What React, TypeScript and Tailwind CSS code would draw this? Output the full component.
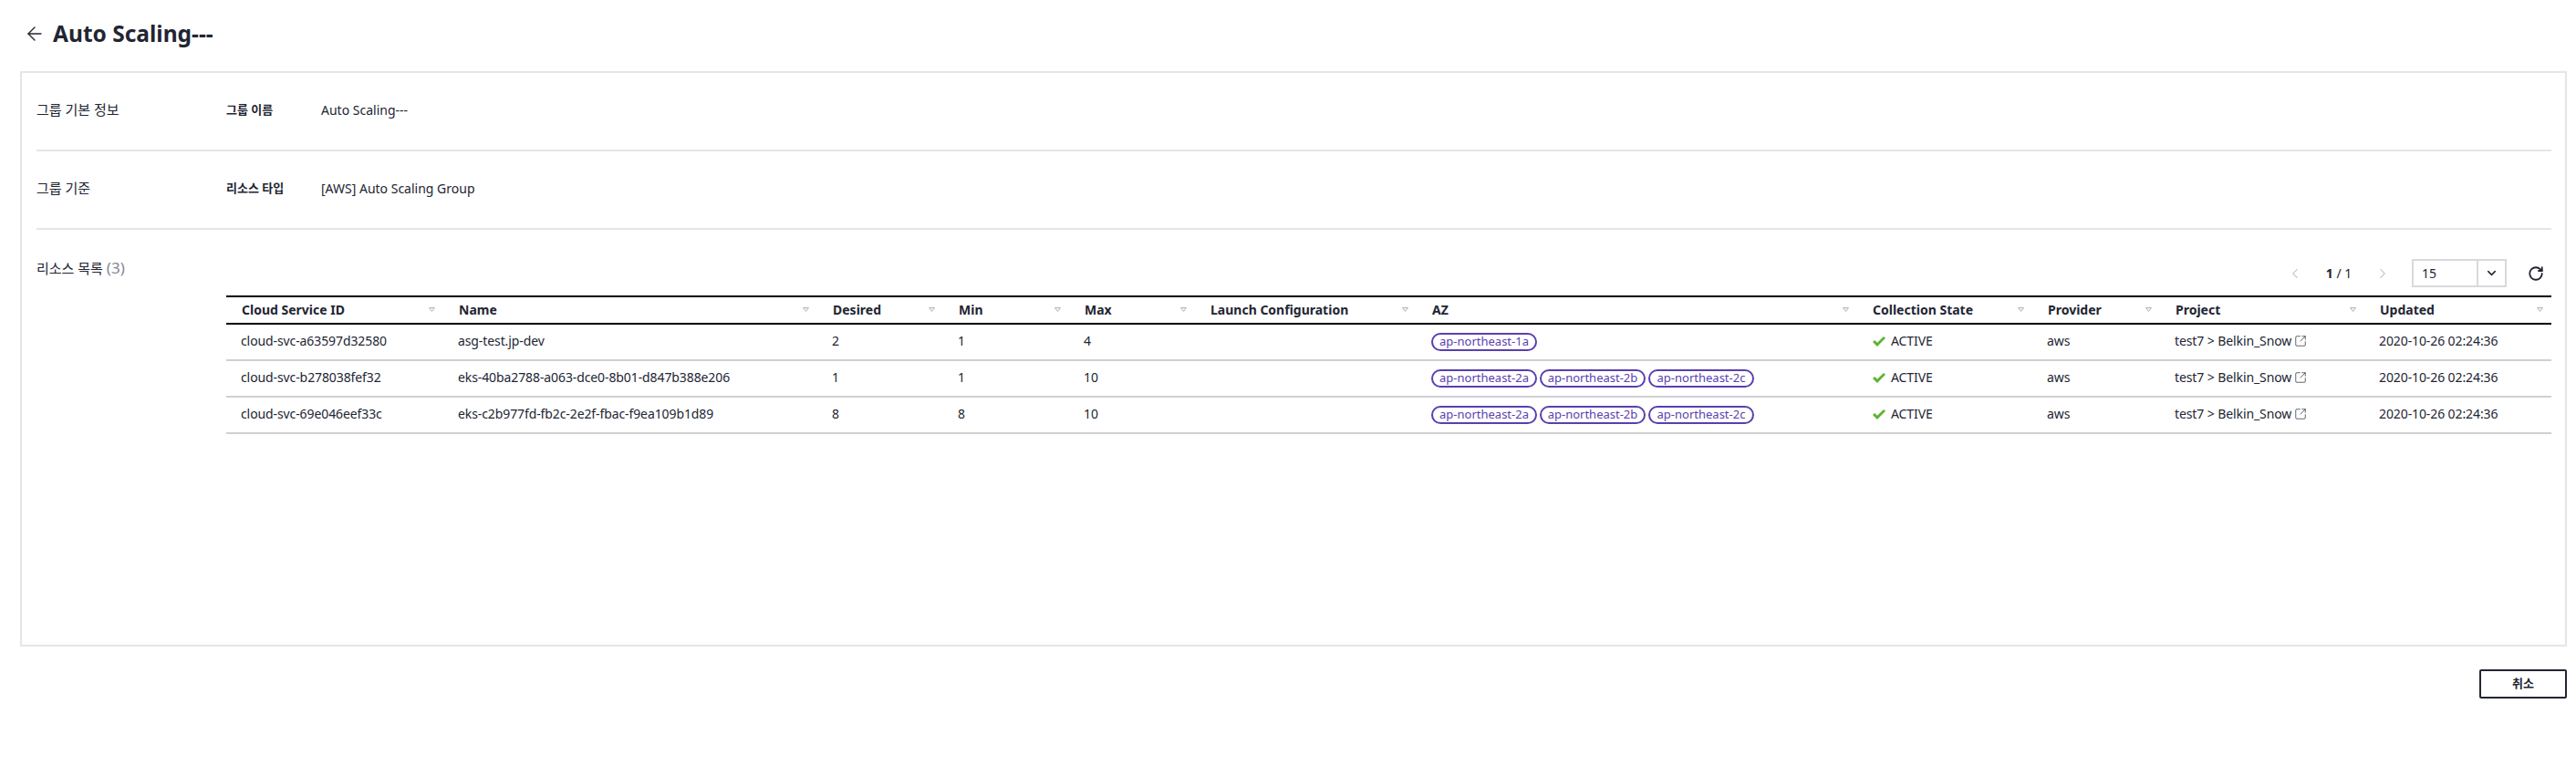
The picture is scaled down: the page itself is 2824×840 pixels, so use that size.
import React from "react";
import { ArrowLeft, ChevronLeft, ChevronRight, ChevronDown, RotateCw, SquareArrowOutUpRight } from "lucide-react";

const font = "font-['Noto_Sans','Noto_Sans_CJK_KR',sans-serif]";
const cols = "grid grid-cols-[238px_410px_138px_138px_138px_243px_483px_192px_140px_224px_205px]";

const headers = ["Cloud Service ID", "Name", "Desired", "Min", "Max", "Launch Configuration", "AZ", "Collection State", "Provider", "Project", "Updated"];
const rows = [
  { id: "cloud-svc-a63597d32580", name: "asg-test.jp-dev", d: "2", min: "1", max: "4", az: ["ap-northeast-1a"] },
  { id: "cloud-svc-b278038fef32", name: "eks-40ba2788-a063-dce0-8b01-d847b388e206", d: "1", min: "1", max: "10", az: ["ap-northeast-2a", "ap-northeast-2b", "ap-northeast-2c"] },
  { id: "cloud-svc-69e046eef33c", name: "eks-c2b977fd-fb2c-2e2f-fbac-f9ea109b1d89", d: "8", min: "8", max: "10", az: ["ap-northeast-2a", "ap-northeast-2b", "ap-northeast-2c"] },
];

function Sort() {
  return (
    <svg width="7" height="5" viewBox="0 0 7 5" className="shrink-0">
      <path d="M0.5 0.5H6.5L3.5 4.5Z" fill="#f4f4f6" stroke="#b4b4bc" strokeWidth="1" />
    </svg>
  );
}

function Cell({ children }: { children?: React.ReactNode }) {
  return <div className="flex items-center pl-[16px] pb-[4px] min-w-0 whitespace-nowrap tracking-[-0.1px]">{children}</div>;
}

export default function App() {
  return (
    <div className={`${font} w-[2824px] h-[840px] bg-white text-[#222532] text-[14px] flex flex-col`}>
      <div className="h-[78px] flex items-center pl-[26px] pb-[4px] shrink-0">
        <ArrowLeft size={24} strokeWidth={1.4} className="mr-[8px]" />
        <h1 className="text-[24.5px] font-bold leading-none">Auto Scaling---</h1>
      </div>

      <div className="mx-[22px] w-[2792px] h-[631px] border-2 border-[#e5e5e8] pl-[16px] pr-[15px] flex flex-col shrink-0">
        <div className="h-[86px] pb-[3px] border-b-2 border-[#e5e5e8] flex items-center shrink-0">
          <div className="w-[208px] text-[15px]">그룹 기본 정보</div>
          <div className="w-[104px] font-bold text-[13px]">그룹 이름</div>
          <div>Auto Scaling---</div>
        </div>
        <div className="h-[86px] pb-[3px] border-b-2 border-[#e5e5e8] flex items-center shrink-0">
          <div className="w-[208px] text-[15px]">그룹 기준</div>
          <div className="w-[104px] font-bold text-[13px]">리소스 타입</div>
          <div>[AWS] Auto Scaling Group</div>
        </div>
        <div className="flex">
          <div className="w-[208px] pt-[30px] text-[15px] leading-[24px] shrink-0">
            리소스 목록 <span className="text-[#858895] text-[17px]">(3)</span>
          </div>
          <div className="flex-1 min-w-0 pt-[32px]">
            <div className="h-[31px] flex items-center justify-end pr-[8px] mb-[9px]">
              <ChevronLeft size={18} strokeWidth={1.5} className="text-[#c9c9cf]" />
              <div className="w-[78px] text-center">
                <span className="font-bold">1</span> / 1
              </div>
              <ChevronRight size={18} strokeWidth={1.5} className="text-[#c9c9cf]" />
              <div className="ml-[23px] w-[104px] h-[31px] border-2 border-[#d9d9dd] flex items-center">
                <div className="flex-1 pl-[9px] pb-[1px]">15</div>
                <div className="w-[31px] h-full border-l-2 border-[#d9d9dd] flex items-center justify-center">
                  <ChevronDown size={15} strokeWidth={2.4} />
                </div>
              </div>
              <RotateCw size={18} strokeWidth={2.4} className="ml-[23px]" />
            </div>
            <div className={`${cols} h-[32px] border-y-2 border-black font-bold`}>
              {headers.map((h) => (
                <div key={h} className="flex items-center justify-between pl-[17px] pr-[9px] pb-[1px] whitespace-nowrap">
                  <span>{h}</span>
                  <Sort />
                </div>
              ))}
            </div>
            {rows.map((r) => (
              <div key={r.id} className={`${cols} h-[40px] border-b-2 border-[#cfcfd5]`}>
                <Cell>{r.id}</Cell>
                <Cell>{r.name}</Cell>
                <Cell>{r.d}</Cell>
                <Cell>{r.min}</Cell>
                <Cell>{r.max}</Cell>
                <Cell />
                <Cell>
                  <div className="flex gap-[3px] mt-[3px] tracking-normal">
                    {r.az.map((a) => (
                      <span key={a} className="w-[116px] h-[20px] border-2 border-[#5a3fb0] rounded-full text-center text-[13px] leading-[14px] text-[#5a3fb0]">
                        {a}
                      </span>
                    ))}
                  </div>
                </Cell>
                <Cell>
                  <svg width="14" height="11" viewBox="0 0 14 11" className="ml-[1px] mr-[6px] mt-[3px] shrink-0">
                    <polygon points="0,6 2.2,4 5,6.8 12,0 14,1.8 5,11" fill="#5eb331" />
                  </svg>
                  ACTIVE
                </Cell>
                <Cell>aws</Cell>
                <Cell>
                  test7 &gt; Belkin_Snow
                  <SquareArrowOutUpRight size={14} strokeWidth={1.2} className="ml-[3px] mt-[2px] text-[#222532]" />
                </Cell>
                <Cell>2020-10-26 02:24:36</Cell>
              </div>
            ))}
          </div>
        </div>
      </div>

      <div className="flex justify-end pr-[10px] pt-[25px]">
        <button className="w-[96px] h-[32px] border-2 border-[#222532] rounded-[2px] font-bold text-[13px]">취소</button>
      </div>
    </div>
  );
}
